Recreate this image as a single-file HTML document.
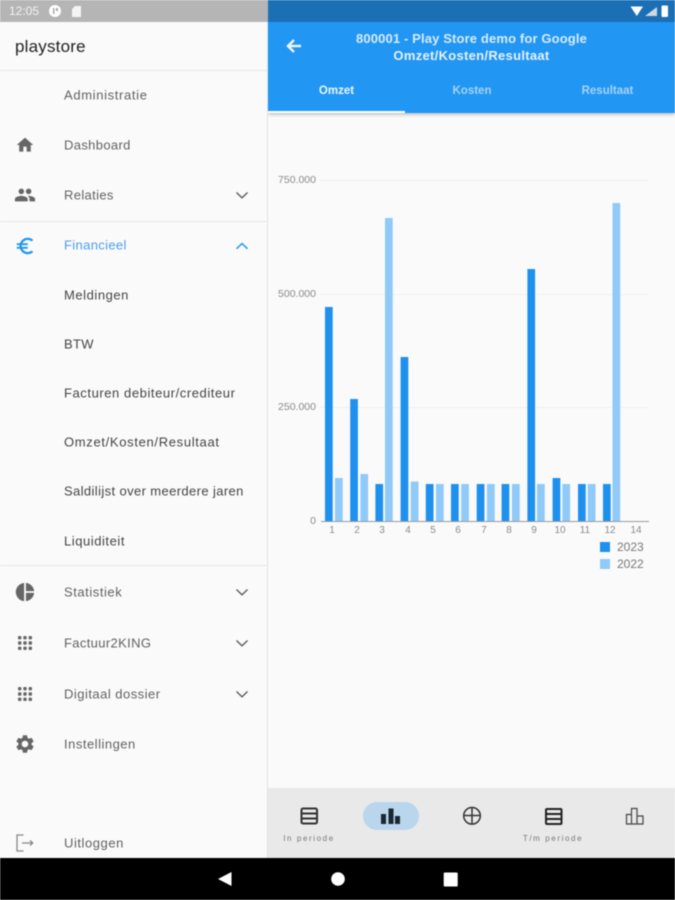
<!DOCTYPE html>
<html lang="nl"><head><meta charset="utf-8"><title>playstore</title>
<style>
html,body{margin:0;padding:0;background:#fafafa}
#p{position:relative;width:675px;height:900px;overflow:hidden;background:#fafafa;font-family:"Liberation Sans",sans-serif;filter:blur(.45px)}
.a{position:absolute}
.t{position:absolute;white-space:nowrap;line-height:16px;transform:translateY(-8px)}
.n{left:64px;font-size:13px;color:#616161;letter-spacing:.35px;transform:translateY(-7.500px)}
.l{position:absolute;left:0;width:268px;height:1px;background:#e8e8e8}
svg{position:absolute;overflow:visible}
.ax{font-size:10px;color:#8a8a8a;text-align:center;width:24px}
.yl{font-size:10.500px;color:#8a8a8a;text-align:right;left:276px;width:40px}
.c{fill:none;stroke:#555;stroke-width:1.300}
</style></head><body><div id="p">
<div class="a" style="left:0;top:0;width:268px;height:22px;background:#b5b5b5"></div>
<div class="a" style="left:268px;top:0;width:407px;height:22px;background:#1a6fb5"></div>
<div class="t" style="left:9px;top:11px;font-size:12px;color:#f2f2f2">12:05</div>
<svg style="left:0;top:0" width="90" height="22"><circle cx="55" cy="11" r="6" fill="#fff"/><path d="M53 8h1.500v6H53zM56 8h2v3h-2z" fill="#aaa"/><path d="M72 9l3-3h6v11H72z" fill="#f4f4f4"/></svg>
<svg style="left:625px;top:0" width="50" height="22"><path d="M5.500 6.500h12.500l-6.200 9.500z" fill="#fff"/><path d="M20 16l12-9v9z" fill="#cfd8e2"/><rect x="36.500" y="5.500" width="6.500" height="11.500" rx="1" fill="#fff"/></svg>

<div class="a" style="left:267px;top:22px;width:1px;height:836px;background:#e2e2e2"></div>
<div class="t" style="left:15px;top:46.500px;font-size:17px;color:#222;letter-spacing:.2px">playstore</div>
<div class="l" style="top:70px"></div><div class="l" style="top:221px"></div><div class="l" style="top:565px"></div>
<div class="t n" style="top:95px;letter-spacing:.65px">Administratie</div>
<div class="t n" style="top:145px">Dashboard</div>
<div class="t n" style="top:195px">Relaties</div>
<div class="t n" style="top:245px;color:#4a9df0">Financieel</div>
<div class="t n" style="top:295px;color:#444;letter-spacing:.55px">Meldingen</div>
<div class="t n" style="top:344px;color:#444">BTW</div>
<div class="t n" style="top:393px;color:#444;letter-spacing:.57px">Facturen debiteur/crediteur</div>
<div class="t n" style="top:442px;color:#444;letter-spacing:.67px">Omzet/Kosten/Resultaat</div>
<div class="t n" style="top:491px;color:#444;letter-spacing:.38px">Saldilijst over meerdere jaren</div>
<div class="t n" style="top:541px;color:#444;letter-spacing:.55px">Liquiditeit</div>
<div class="t n" style="top:592px;letter-spacing:.55px">Statistiek</div>
<div class="t n" style="top:643px">Factuur2KING</div>
<div class="t n" style="top:694px;letter-spacing:.48px">Digitaal dossier</div>
<div class="t n" style="top:744px;letter-spacing:.5px">Instellingen</div>
<div class="t n" style="top:843px;letter-spacing:.55px">Uitloggen</div>

<svg style="left:14px;top:134px" width="22" height="22" viewBox="0 0 24 24"><path fill="#666" d="M10 20v-6h4v6h5v-8h3L12 3 2 12h3v8z" transform="translate(1.200 1.200) scale(.9)"/></svg>
<svg style="left:14px;top:184px" width="22" height="22" viewBox="0 0 24 24"><path fill="#666" d="M16 11c1.660 0 2.990-1.340 2.990-3S17.660 5 16 5c-1.660 0-3 1.340-3 3s1.340 3 3 3zm-8 0c1.660 0 2.990-1.340 2.990-3S9.660 5 8 5C6.340 5 5 6.340 5 8s1.340 3 3 3zm0 2c-2.330 0-7 1.170-7 3.500V19h14v-2.500c0-2.330-4.670-3.500-7-3.500zm8 0c-.29 0-.62.02-.97.05 1.160.84 1.970 1.970 1.970 3.450V19h6v-2.500c0-2.330-4.670-3.500-7-3.500z"/></svg>
<svg style="left:14px;top:235px" width="22" height="22" viewBox="0 0 24 24"><path fill="#2196f3" d="M15 18.500c-2.510 0-4.680-1.420-5.760-3.500H15v-2H8.580c-.05-.33-.08-.66-.08-1s.03-.67.08-1H15V9H9.240C10.320 6.920 12.500 5.500 15 5.500c1.610 0 3.090.59 4.230 1.570L21 5.300C19.410 3.870 17.300 3 15 3c-3.920 0-7.240 2.510-8.480 6H3v2h3.060c-.04.33-.06.66-.06 1s.02.67.06 1H3v2h3.520c1.240 3.490 4.560 6 8.480 6 2.310 0 4.410-.87 6-2.300l-1.780-1.770c-1.130.98-2.600 1.570-4.220 1.570z"/></svg>
<svg style="left:14px;top:581px" width="22" height="22" viewBox="0 0 24 24"><path fill="#666" d="M11 2v20c-5.070-.5-9-4.790-9-10s3.930-9.500 9-10zm2.030 0v8.990H22c-.47-4.740-4.240-8.520-8.970-8.990zm0 11.010V22c4.740-.47 8.500-4.250 8.970-8.990h-8.970z"/></svg>
<svg style="left:13px;top:631px" width="24" height="24" viewBox="0 0 24 24"><g fill="#666"><rect x="5" y="5" width="3.400" height="3.400" rx="1"/><rect x="10.300" y="5" width="3.400" height="3.400" rx="1"/><rect x="15.600" y="5" width="3.400" height="3.400" rx="1"/><rect x="5" y="10.300" width="3.400" height="3.400" rx="1"/><rect x="10.300" y="10.300" width="3.400" height="3.400" rx="1"/><rect x="15.600" y="10.300" width="3.400" height="3.400" rx="1"/><rect x="5" y="15.600" width="3.400" height="3.400" rx="1"/><rect x="10.300" y="15.600" width="3.400" height="3.400" rx="1"/><rect x="15.600" y="15.600" width="3.400" height="3.400" rx="1"/></g></svg>
<svg style="left:13px;top:682px" width="24" height="24" viewBox="0 0 24 24"><g fill="#666"><rect x="5" y="5" width="3.400" height="3.400" rx="1"/><rect x="10.300" y="5" width="3.400" height="3.400" rx="1"/><rect x="15.600" y="5" width="3.400" height="3.400" rx="1"/><rect x="5" y="10.300" width="3.400" height="3.400" rx="1"/><rect x="10.300" y="10.300" width="3.400" height="3.400" rx="1"/><rect x="15.600" y="10.300" width="3.400" height="3.400" rx="1"/><rect x="5" y="15.600" width="3.400" height="3.400" rx="1"/><rect x="10.300" y="15.600" width="3.400" height="3.400" rx="1"/><rect x="15.600" y="15.600" width="3.400" height="3.400" rx="1"/></g></svg>
<svg style="left:14px;top:733px" width="22" height="22" viewBox="0 0 24 24"><path fill="#666" d="M19.140 12.940c.04-.3.06-.61.06-.94 0-.32-.02-.64-.07-.94l2.030-1.580c.18-.14.23-.41.12-.61l-1.920-3.320c-.12-.22-.37-.29-.59-.22l-2.390.96c-.5-.38-1.030-.7-1.620-.94l-.36-2.540c-.04-.24-.24-.41-.48-.41h-3.840c-.24 0-.43.17-.47.41l-.36 2.540c-.59.24-1.130.57-1.620.94l-2.390-.96c-.22-.08-.47 0-.59.22L2.740 8.870c-.12.21-.08.47.12.61l2.030 1.580c-.05.3-.09.63-.09.94s.02.64.07.94l-2.030 1.580c-.18.14-.23.41-.12.61l1.920 3.320c.12.22.37.29.59.22l2.390-.96c.5.38 1.030.7 1.620.94l.36 2.540c.05.24.24.41.48.41h3.840c.24 0 .44-.17.47-.41l.36-2.540c.59-.24 1.130-.56 1.620-.94l2.390.96c.22.08.47 0 .59-.22l1.920-3.320c.12-.22.07-.47-.12-.61l-2.010-1.580zM12 15.600c-1.980 0-3.600-1.620-3.600-3.600s1.620-3.600 3.600-3.600 3.600 1.620 3.600 3.600-1.620 3.600-3.600 3.600z"/></svg>
<svg style="left:13px;top:831px" width="24" height="24" viewBox="0 0 24 24"><path fill="none" stroke="#888" stroke-width="1.300" d="M10.500 4H4v16h6.500M9 12h10.500M17 9.500l2.700 2.500-2.700 2.500"/></svg>

<svg style="left:235px;top:188px" width="14" height="14"><path class="c" d="M1.500 4.500L7 9.800l5.500-5.300"/></svg>
<svg style="left:235px;top:239px" width="14" height="14"><path fill="none" stroke="#2196f3" stroke-width="1.500" d="M1.500 9.800L7 4.500l5.500 5.300"/></svg>
<svg style="left:235px;top:585px" width="14" height="14"><path class="c" d="M1.500 4.500L7 9.800l5.500-5.300"/></svg>
<svg style="left:235px;top:636px" width="14" height="14"><path class="c" d="M1.500 4.500L7 9.800l5.500-5.300"/></svg>
<svg style="left:235px;top:687px" width="14" height="14"><path class="c" d="M1.500 4.500L7 9.800l5.500-5.300"/></svg>

<div class="a" style="left:268px;top:22px;width:407px;height:91px;background:#2196f3;box-shadow:0 1px 4px rgba(0,0,0,.3);clip-path:inset(0 0 -6px 0)"></div>
<div class="a" style="left:268px;top:111px;width:137px;height:2px;background:#fff"></div>
<svg style="left:281px;top:34px" width="24" height="24"><path fill="none" stroke="#eaf4fd" stroke-width="2.500" d="M20 12H7M13 6l-6 6 6 6"/></svg>
<div class="t" style="left:268px;width:407px;text-align:center;top:38.500px;font-size:13px;font-weight:bold;letter-spacing:.14px;color:#d8ebfb">800001 - Play Store demo for Google</div>
<div class="t" style="left:268px;width:407px;text-align:center;top:55.500px;font-size:13px;font-weight:bold;letter-spacing:.3px;color:#e6f2fc">Omzet/Kosten/Resultaat</div>
<div class="t" style="left:268px;width:137px;text-align:center;top:91px;font-size:11.500px;font-weight:bold;color:#eef6fd">Omzet</div>
<div class="t" style="left:404px;width:136px;text-align:center;top:91px;font-size:11.500px;font-weight:bold;color:#a6d3f8">Kosten</div>
<div class="t" style="left:540px;width:135px;text-align:center;top:91px;font-size:11.500px;font-weight:bold;color:#a6d3f8">Resultaat</div>

<svg style="left:0;top:0" width="675" height="900">
<g fill="#efefef"><rect x="320" y="180" width="328" height="1"/><rect x="320" y="294" width="328" height="1"/><rect x="320" y="407" width="328" height="1"/></g>
<g fill="#1e90ee">
<rect x="325" y="307" width="7.700" height="214.500"/><rect x="350.200" y="399" width="7.700" height="122.500"/><rect x="375.400" y="484" width="7.700" height="37.500"/><rect x="400.600" y="357" width="7.700" height="164.500"/><rect x="425.800" y="484" width="7.700" height="37.500"/><rect x="451" y="484" width="7.700" height="37.500"/><rect x="476.700" y="484" width="7.700" height="37.500"/><rect x="501.600" y="484" width="7.700" height="37.500"/><rect x="527.400" y="269" width="7.700" height="252.500"/><rect x="552.600" y="478" width="7.700" height="43.500"/><rect x="578" y="484" width="7.700" height="37.500"/><rect x="603" y="484" width="7.700" height="37.500"/>
</g>
<g fill="#90caf9">
<rect x="335" y="478" width="7.700" height="43.500"/><rect x="360.400" y="474" width="7.700" height="47.500"/><rect x="385" y="218" width="7.700" height="303.500"/><rect x="410.800" y="481.500" width="7.700" height="40"/><rect x="436" y="484" width="7.700" height="37.500"/><rect x="461.200" y="484" width="7.700" height="37.500"/><rect x="487" y="484" width="7.700" height="37.500"/><rect x="512" y="484" width="7.700" height="37.500"/><rect x="537" y="484" width="7.700" height="37.500"/><rect x="562.400" y="484" width="7.700" height="37.500"/><rect x="587.800" y="484" width="7.700" height="37.500"/><rect x="612.500" y="203" width="7.700" height="318.500"/>
</g>
<rect x="321" y="521" width="328" height="1" fill="#9a9a9a"/>
<rect x="600" y="542" width="10" height="10" fill="#1e90ee"/><rect x="600" y="559" width="10" height="10" fill="#90caf9"/>
</svg>
<div class="t yl" style="top:180px">750.000</div>
<div class="t yl" style="top:294px">500.000</div>
<div class="t yl" style="top:407px">250.000</div>
<div class="t yl" style="top:521px">0</div>
<div class="t ax" style="left:320px;top:531px">1</div><div class="t ax" style="left:345px;top:531px">2</div><div class="t ax" style="left:370px;top:531px">3</div><div class="t ax" style="left:396px;top:531px">4</div><div class="t ax" style="left:421px;top:531px">5</div><div class="t ax" style="left:446px;top:531px">6</div><div class="t ax" style="left:472px;top:531px">7</div><div class="t ax" style="left:497px;top:531px">8</div><div class="t ax" style="left:522px;top:531px">9</div><div class="t ax" style="left:548px;top:531px">10</div><div class="t ax" style="left:573px;top:531px">11</div><div class="t ax" style="left:598px;top:531px">12</div><div class="t ax" style="left:624px;top:531px">14</div>
<div class="t" style="left:617px;top:547px;font-size:12px;color:#777">2023</div>
<div class="t" style="left:617px;top:564px;font-size:12px;color:#777">2022</div>

<div class="a" style="left:268px;top:788px;width:407px;height:70px;background:#e9e9e9"></div>
<div class="a" style="left:363px;top:802px;width:56px;height:28px;border-radius:14px;background:#b9d6ec"></div>
<svg style="left:268px;top:788px" width="407" height="70">
<g fill="none" stroke="#333" stroke-width="2"><rect x="33.500" y="20.500" width="15.500" height="15" rx="1.500"/><path d="M33.500 25.500h15.500M33.500 30.500h15.500"/></g>
<g fill="#1c2733"><rect x="113" y="26" width="5" height="10"/><rect x="120.500" y="20.500" width="5" height="15.500"/><rect x="127" y="28" width="5" height="8"/></g>
<g fill="none" stroke="#333" stroke-width="1.500"><circle cx="204" cy="27.800" r="8.300"/><path d="M204 19.500v16.600M196 27.500h16"/></g>
<g fill="none" stroke="#222" stroke-width="2"><rect x="278" y="21" width="15.500" height="15" rx="1"/><path d="M278 26h15.500M278 31h15.500"/></g>
<g fill="none" stroke="#444" stroke-width="1.200"><path d="M358.500 36v-9.500h5V36zM363.500 36V20.500h5.500V36zM369 36v-8h6v8z"/></g>
</svg>
<div class="t" style="left:268px;width:82px;text-align:center;top:838.500px;font-size:8px;letter-spacing:1.600px;color:#777">In periode</div>
<div class="t" style="left:510px;width:86px;text-align:center;top:838.500px;font-size:8px;letter-spacing:1.600px;color:#777">T/m periode</div>

<div class="a" style="left:0;top:858px;width:675px;height:42px;background:#000"></div>
<svg style="left:0;top:858px" width="675" height="42"><path d="M218 21l13.500-7v14z" fill="#fff"/><circle cx="338" cy="21" r="6.800" fill="#fff"/><rect x="443.700" y="14.500" width="14" height="14" rx="1" fill="#fff"/></svg>
</div></body></html>
